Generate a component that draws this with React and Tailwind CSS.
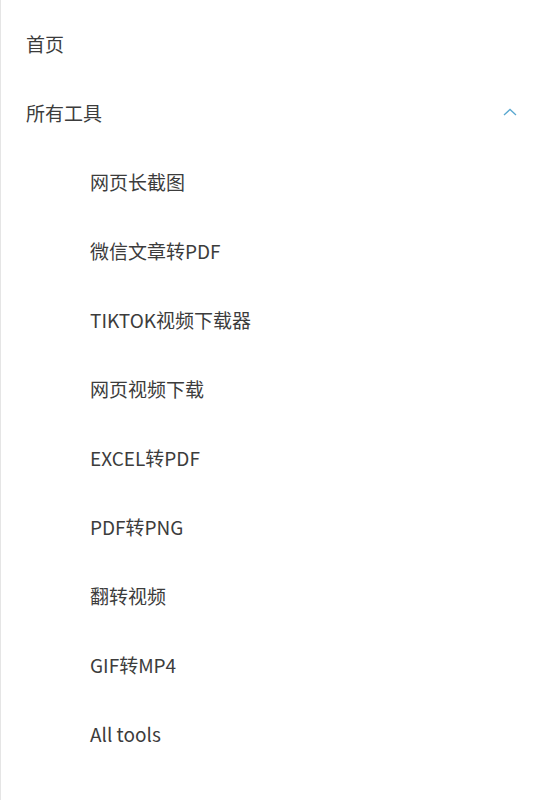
import React, { useState } from 'react';

const tools = [
  '网页长截图',
  '微信文章转PDF',
  'TIKTOK视频下载器',
  '网页视频下载',
  'EXCEL转PDF',
  'PDF转PNG',
  '翻转视频',
  'GIF转MP4',
  'All tools',
];

export default function App() {
  const [open, setOpen] = useState(true);

  return (
    <div
      className="min-h-[800px] bg-white border-l border-[#e5e5e5] pt-[10px] text-[#3c3c3c] text-[19px]"
      style={{ fontFamily: '"Noto Sans CJK SC", "Noto Sans", sans-serif' }}
    >
      <div className="h-[69px] flex items-center pl-[25px]">首页</div>
      <button
        className="w-full h-[69px] flex items-center justify-between pl-[25px] pr-[25px] text-left"
        onClick={() => setOpen(!open)}
      >
        <span>所有工具</span>
        <svg width="14" height="8" viewBox="0 0 14 8" fill="none" className={open ? '-mt-[3px]' : '-mt-[3px] rotate-180'}>
          <path d="M1 7L7 1.5L13 7" stroke="#5aa8d0" strokeWidth="1.3" />
        </svg>
      </button>
      {open && (
        <ul>
          {tools.map((name, index) => (
            <li key={index} className="h-[69px] flex items-center pl-[89px]">
              {name}
            </li>
          ))}
        </ul>
      )}
    </div>
  );
}
